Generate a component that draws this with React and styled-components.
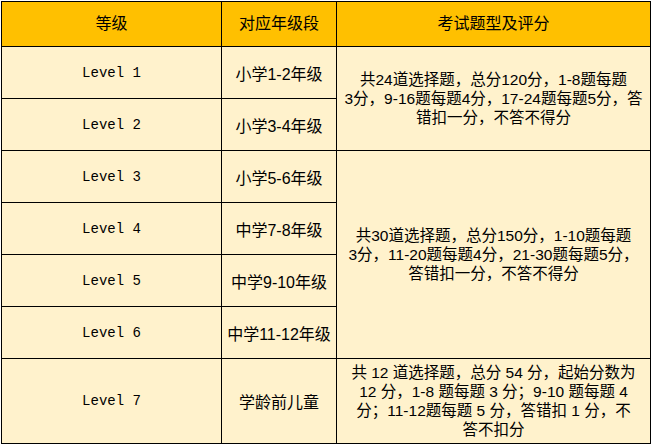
import React from "react";
import styled, { createGlobalStyle } from "styled-components";

const rows = [
  { level: "Level 1", grade: "小学1-2年级" },
  { level: "Level 2", grade: "小学3-4年级" },
  { level: "Level 3", grade: "小学5-6年级" },
  { level: "Level 4", grade: "中学7-8年级" },
  { level: "Level 5", grade: "中学9-10年级" },
  { level: "Level 6", grade: "中学11-12年级" },
  { level: "Level 7", grade: "学龄前儿童", tall: true },
];

// merged description cells: index of the first row, how many rows, lines
const rules = {
  0: {
    span: 2,
    lines: [
      "共24道选择题，总分120分，1-8题每题",
      "3分，9-16题每题4分，17-24题每题5分，答",
      "错扣一分，不答不得分",
    ],
  },
  2: {
    span: 4,
    lines: [
      "共30道选择题，总分150分，1-10题每题",
      "3分，11-20题每题4分，21-30题每题5分，",
      "答错扣一分，不答不得分",
    ],
  },
  6: {
    span: 1,
    lines: [
      "共 12 道选择题，总分 54 分，起始分数为",
      "12 分，1-8 题每题 3 分；9-10 题每题 4",
      "分；11-12题每题 5 分，答错扣 1 分，不",
      "答不扣分",
    ],
  },
};

function App() {
  return (
    <>
      <GlobalStyle />
      <Page>
        <Table>
          <colgroup>
            <col style={{ width: 220 }} />
            <col style={{ width: 115 }} />
            <col style={{ width: 314 }} />
          </colgroup>
          <thead>
            <HeadRow>
              <HeadCell>等级</HeadCell>
              <HeadCell>对应年级段</HeadCell>
              <HeadCell>考试题型及评分</HeadCell>
            </HeadRow>
          </thead>
          <tbody>
            {rows.map((r, i) => (
              <BodyRow key={r.level} $tall={r.tall}>
                <LevelCell>{r.level}</LevelCell>
                <GradeCell>{r.grade}</GradeCell>
                {rules[i] && (
                  <RuleCell rowSpan={rules[i].span}>
                    {rules[i].lines.map((l) => (
                      <RuleLine key={l}>{l}</RuleLine>
                    ))}
                  </RuleCell>
                )}
              </BodyRow>
            ))}
          </tbody>
        </Table>
      </Page>
    </>
  );
}

const GlobalStyle = createGlobalStyle`
  html, body {
    margin: 0;
    padding: 0;
    background: #ffffff;
  }
  body {
    font-family: "Liberation Sans", "Noto Sans CJK SC", sans-serif;
    color: #000;
  }
`;

const Page = styled.div`
  padding: 1px 0 0 1px;
  width: 652px;
  height: 445px;
  box-sizing: border-box;
`;

const Table = styled.table`
  border-collapse: collapse;
  table-layout: fixed;
  width: 649px;

  td,
  th {
    border: 1px solid #000;
    padding: 0;
    text-align: center;
    vertical-align: middle;
  }
`;

const HeadRow = styled.tr`
  height: 45px;
  background-color: #ffc000;
`;

const HeadCell = styled.th`
  font-weight: 400;
  font-size: 16px;
  line-height: 20px;
`;

const BodyRow = styled.tr`
  height: ${(p) => (p.$tall ? "85px" : "52px")};
  background-color: #fff2cc;
`;

const LevelCell = styled.td`
  font-family: "Liberation Mono", "DejaVu Sans Mono", monospace;
  font-size: 14px;
  white-space: pre;
`;

const GradeCell = styled.td`
  font-size: 16px;
  white-space: nowrap;
`;

const RuleCell = styled.td`
  font-size: 15.5px;
  line-height: 19px;
`;

const RuleLine = styled.div`
  white-space: pre;
`;

export default App;
